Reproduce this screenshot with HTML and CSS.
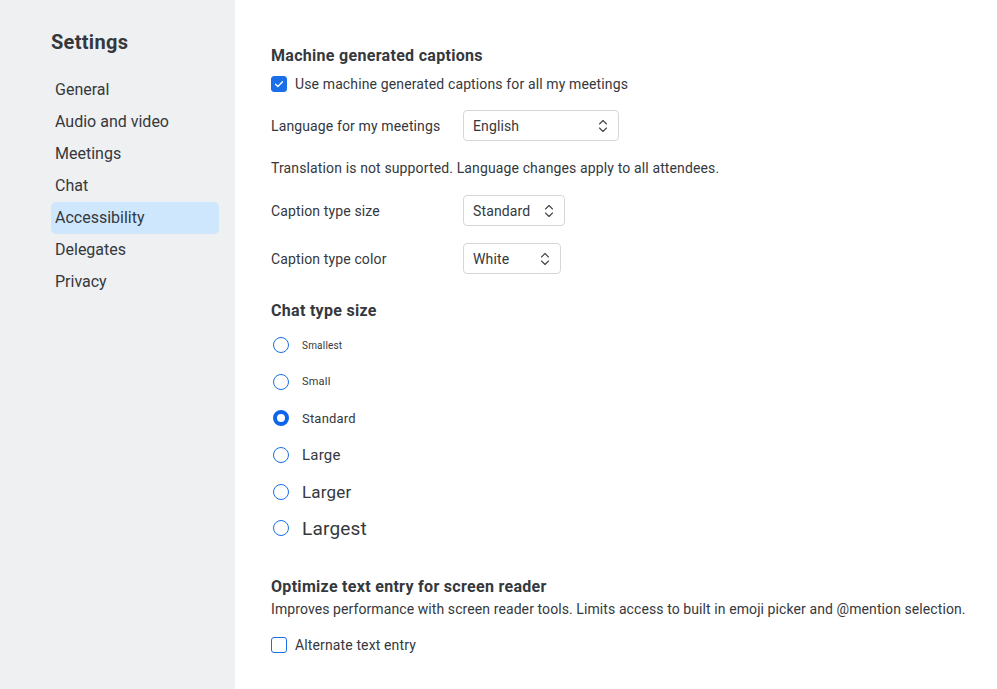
FILE: index.html
```html
<!DOCTYPE html>
<html lang="en">
<head>
<meta charset="utf-8">
<title>Settings</title>
<link rel="stylesheet" href="styles.css">
</head>
<body>
<div class="app">
  <aside class="sidebar">
    <h1 class="title">Settings</h1>
    <nav class="nav">
      <a class="nav-item">General</a>
      <a class="nav-item">Audio and video</a>
      <a class="nav-item">Meetings</a>
      <a class="nav-item">Chat</a>
      <a class="nav-item active">Accessibility</a>
      <a class="nav-item">Delegates</a>
      <a class="nav-item">Privacy</a>
    </nav>
  </aside>
  <main class="content">
    <section class="section">
      <h2 class="heading">Machine generated captions</h2>
      <label class="check-row">
        <span class="checkbox checked"><svg viewBox="0 0 16 16" width="16" height="16"><path d="M4.5 8.2l2.4 2.3 4.6-4.8" fill="none" stroke="#fff" stroke-width="1.3" stroke-linecap="round" stroke-linejoin="round"/></svg></span>
        <span>Use machine generated captions for all my meetings</span>
      </label>
      <div class="field-row lang-row">
        <span class="field-label">Language for my meetings</span>
        <span class="select sel-lang">English<svg class="chev" viewBox="0 0 10 14" width="10" height="14"><path d="M1.5 5l3.5-3.5 3.5 3.5M1.5 9l3.5 3.5 3.5-3.5" fill="none" stroke="#444" stroke-width="1.1" stroke-linecap="round" stroke-linejoin="round"/></svg></span>
      </div>
      <p class="note">Translation is not supported. Language changes apply to all attendees.</p>
      <div class="field-row size-row">
        <span class="field-label">Caption type size</span>
        <span class="select sel-size">Standard<svg class="chev" viewBox="0 0 10 14" width="10" height="14"><path d="M1.5 5l3.5-3.5 3.5 3.5M1.5 9l3.5 3.5 3.5-3.5" fill="none" stroke="#444" stroke-width="1.1" stroke-linecap="round" stroke-linejoin="round"/></svg></span>
      </div>
      <div class="field-row color-row">
        <span class="field-label">Caption type color</span>
        <span class="select sel-color">White<svg class="chev" viewBox="0 0 10 14" width="10" height="14"><path d="M1.5 5l3.5-3.5 3.5 3.5M1.5 9l3.5 3.5 3.5-3.5" fill="none" stroke="#444" stroke-width="1.1" stroke-linecap="round" stroke-linejoin="round"/></svg></span>
      </div>
    </section>
    <section class="section chat">
      <h2 class="heading">Chat type size</h2>
      <div class="radios">
        <label class="radio-row"><span class="radio"></span><span class="r-text s1">Smallest</span></label>
        <label class="radio-row"><span class="radio"></span><span class="r-text s2">Small</span></label>
        <label class="radio-row"><span class="radio on"></span><span class="r-text s3">Standard</span></label>
        <label class="radio-row"><span class="radio"></span><span class="r-text s4">Large</span></label>
        <label class="radio-row"><span class="radio"></span><span class="r-text s5">Larger</span></label>
        <label class="radio-row"><span class="radio"></span><span class="r-text s6">Largest</span></label>
      </div>
    </section>
    <section class="section reader">
      <h2 class="heading">Optimize text entry for screen reader</h2>
      <p class="desc">Improves performance with screen reader tools. Limits access to built in emoji picker and @mention selection.</p>
      <label class="check-row alt">
        <span class="checkbox"></span>
        <span>Alternate text entry</span>
      </label>
    </section>
  </main>
</div>
</body>
</html>
```
FILE: styles.css
```css
* { box-sizing: border-box; }
html, body { margin: 0; padding: 0; height: 100%; }
body {
  font-family: Roboto, "Liberation Sans", sans-serif;
  color: #35383d;
  background: #fff;
}
.app { display: flex; height: 689px; }
.sidebar {
  width: 235px;
  flex: none;
  background: #eff0f2;
  padding: 29px 16px 0 51px;
}
.title {
  margin: 0 0 19px;
  font-size: 20px;
  font-weight: 700;
  line-height: 26px;
  letter-spacing: 0.3px;
  color: #35383d;
}
.nav { display: flex; flex-direction: column; }
.nav-item {
  display: block;
  height: 32px;
  line-height: 32px;
  padding-left: 4px;
  font-size: 16px;
  border-radius: 5px;
  color: #35383d;
}
.nav-item.active { background: #cfe7fc; }
.content {
  flex: 1;
  padding: 46px 0 0 36px;
  font-size: 14px;
  letter-spacing: 0.13px;
}
.section { display: flex; flex-direction: column; }
.heading {
  margin: 0;
  font-size: 16px;
  font-weight: 700;
  line-height: 20px;
  letter-spacing: 0.3px;
  color: #35383d;
}
.check-row {
  display: flex;
  align-items: center;
  gap: 8px;
  margin-top: 8px;
  line-height: 20px;
}
.checkbox {
  width: 16px; height: 16px;
  border-radius: 3px;
  border: 1.5px solid #1a6fe8;
  display: inline-flex;
  flex: none;
}
.checkbox.checked { background: #1a6fe8; border-color: #1a6fe8; }
.checkbox.checked svg { margin: -1.5px; }
.field-row { display: flex; align-items: center; }
.field-label { width: 192px; flex: none; }
.lang-row { margin-top: 16px; }
.select {
  display: inline-flex;
  align-items: center;
  justify-content: space-between;
  height: 31px;
  padding: 0 10px 0 9px;
  border: 1px solid #d5d7da;
  border-radius: 4px;
  background: #fff;
}
.sel-lang { width: 156px; }
.sel-size { width: 102px; }
.sel-color { width: 98px; }
.chev { flex: none; }
.note { margin: 17px 0 0; line-height: 20px; }
.size-row { margin-top: 17px; }
.color-row { margin-top: 17px; }
.chat { margin-top: 27px; }
.radios { display: flex; flex-direction: column; margin-top: 6px; }
.radio-row {
  display: flex;
  align-items: center;
  gap: 13px;
  height: 36.6px;
  padding-left: 2px;
  letter-spacing: 0.2px;
}
.radio {
  width: 16px; height: 16px;
  border-radius: 50%;
  border: 1.5px solid #1a6fe8;
  flex: none;
}
.radio.on { border: 4.5px solid #0d66e9; }
.s1 { font-size: 10px; }
.s2 { font-size: 11px; }
.s3 { font-size: 13px; }
.s4 { font-size: 15px; }
.s5 { font-size: 17px; }
.s6 { font-size: 19px; }
.reader { margin-top: 30px; }
.desc { margin: 2px 0 0; line-height: 20px; letter-spacing: 0.09px; }
.alt { margin-top: 16px; }
```
